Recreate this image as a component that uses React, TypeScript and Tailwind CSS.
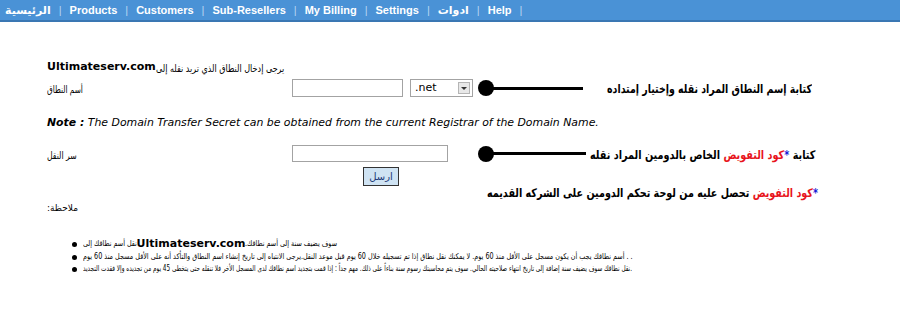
import React, { useLayoutEffect, useRef, useState } from "react";

const navItems = ["الرئيسية", "Products", "Customers", "Sub-Resellers", "My Billing", "Settings", "ادوات", "Help"];

function Sq({ w, s, className = "", children, dir }: { w?: number; s?: number; className?: string; children: React.ReactNode; dir?: "rtl" | "ltr" }) {
  const ref = useRef<HTMLSpanElement>(null);
  const [dims, setDims] = useState<{ k: number; ow: number } | null>(null);
  useLayoutEffect(() => {
    const m = () => {
      const el = ref.current;
      if (!el) return;
      const nw = el.offsetWidth;
      if (!nw) return;
      const k = w ? w / nw : s ?? 1;
      setDims({ k, ow: nw * k });
    };
    m();
    if (document.fonts) document.fonts.ready.then(m);
  }, [w, s]);
  return (
    <span className="inline-block shrink-0 align-top" style={{ width: dims ? dims.ow : undefined }}>
      <span
        ref={ref}
        dir={dir}
        className={"inline-block whitespace-nowrap origin-left " + className}
        style={{ transform: dims ? `scaleX(${dims.k})` : undefined }}
      >
        {children}
      </span>
    </span>
  );
}

function Pin({ len }: { len: number }) {
  return (
    <div className="flex items-center">
      <div className="w-[16px] h-[16px] rounded-full bg-black" />
      <div className="h-[3px] bg-black -ml-[1px]" style={{ width: len }} />
    </div>
  );
}

function Dot() {
  return <div className="w-[5px] h-[5px] rounded-full bg-black shrink-0 mr-[6px]" />;
}

export default function App() {
  return (
    <div className="w-[900px] h-[313px] bg-white text-black overflow-hidden" style={{ fontFamily: '"DejaVu Sans", sans-serif' }}>
      {/* nav */}
      <div className="h-[22px] bg-[#4a92d6] border-b-2 border-[#3a77b3] flex items-center pl-[5px] text-white font-bold text-[11px]" style={{ fontFamily: '"Liberation Sans", "DejaVu Sans", sans-serif' }}>
        {navItems.map((n) => (
          <React.Fragment key={n}>
            <span>{n}</span>
            <span className="mx-[8px] font-normal text-[#b8d6f2]">|</span>
          </React.Fragment>
        ))}
      </div>

      <div className="pl-[47px]">
        <div className="mt-[38px] flex items-center h-[14px]">
          <b className="text-[11px] leading-[14px]">Ultimateserv.com</b>
          <Sq w={128} className="text-[10px] leading-[14px]">يرجى إدخال النطاق الذي تريد نقله إلى</Sq>
        </div>

        <div className="mt-[5px] flex items-center h-[18px]">
          <div className="w-[245px] shrink-0">
            <Sq w={36} className="text-[10px]">أسم النطاق</Sq>
          </div>
          <div className="w-[111px] h-[18px] border border-[#a3a3a3] bg-white shrink-0" />
          <div className="ml-[7px] w-[63px] h-[18px] border border-[#a3a3a3] bg-white flex items-center justify-between pl-[4px] pr-[2px] shrink-0">
            <span className="text-[11px]">.net</span>
            <div className="w-[12px] h-[12px] bg-[#e8e8e8] border border-[#b5b5b5] flex items-center justify-center">
              <div className="w-0 h-0 border-l-[3px] border-r-[3px] border-t-[3px] border-l-transparent border-r-transparent border-t-[#333]" />
            </div>
          </div>
          <div className="ml-[5px] shrink-0"><Pin len={90} /></div>
          <div className="ml-[24px]">
            <Sq w={205} dir="rtl" className="font-bold text-[12px]">كتابة إسم النطاق المراد نقله وإختيار إمتداده</Sq>
          </div>
        </div>

        <div className="mt-[20px] text-[10.9px] italic leading-[12px] whitespace-nowrap">
          <b>Note :</b> The Domain Transfer Secret can be obtained from the current Registrar of the Domain Name.
        </div>

        <div className="mt-[16px] flex items-center h-[17px]">
          <div className="w-[245px] shrink-0">
            <Sq w={30} className="text-[10px]">سر النقل</Sq>
          </div>
          <div className="w-[156px] h-[17px] border border-[#a3a3a3] bg-white shrink-0" />
          <div className="ml-[30px] shrink-0"><Pin len={93} /></div>
          <div className="ml-[4px]">
            <Sq w={225} dir="rtl" className="font-bold text-[12px]">
              كتابة <span className="text-[#1a1ad6]">*</span><span className="text-[#e8141c]">كود التفويض</span> الخاص بالدومين المراد نقله
            </Sq>
          </div>
        </div>

        <div className="flex items-start h-[36px]">
          <button className="ml-[316px] mt-[5px] w-[36px] h-[19px] bg-[#cfe3f3] border border-[#333] text-[10px] text-[#1d3b78] leading-none shrink-0">ارسل</button>
          <div className="ml-[88px] mt-[18px]">
            <Sq w={331} dir="rtl" className="font-bold text-[12px] leading-[14px]">
              <span className="text-[#1a1ad6]">*</span><span className="text-[#e8141c]">كود التفويض</span> تحصل عليه من لوحة تحكم الدومين على الشركه القديمه
            </Sq>
          </div>
        </div>

        <div className="mt-[4px] text-[9px] leading-[12px]">:ملاحظة</div>

        <div className="mt-[24px] pl-[36px] text-[8px] leading-[12px]">
          <div className="flex items-center h-[12px] -ml-[11px]">
            <Dot />
            <Sq s={0.8}>نقل أسم نطاقك إلى</Sq>
            <b className="text-[11px] leading-[12px]">Ultimateserv.com</b>
            <Sq s={0.8}>.سوف يضيف سنة إلى أسم نطاقك</Sq>
          </div>
          <div className="flex items-center h-[12px] mt-[1px] -ml-[11px]">
            <Dot />
            <Sq w={550}>أسم نطاقك يجب أن يكون مسجل على الأقل منذ 60 يوم. لا يمكنك نقل نطاق إذا تم تسجيله خلال 60 يوم قبل موعد النقل.يرجى الانتباه إلى تاريخ إنشاء اسم النطاق والتأكد أنه على الأقل مسجل منذ 60 يوم . .</Sq>
          </div>
          <div className="flex items-center h-[12px] -ml-[11px]">
            <Dot />
            <Sq w={549}>نقل نطاقك سوف يضيف سنة إضافة إلى تاريخ انتهاء صلاحيته الحالي. سوف يتم محاسبتك رسوم سنة بناءاً على ذلك. مهم جداً : إذا قمت بتجديد اسم نطاقك لدى المسجل الأخر فلا تنقله حتى يتخطى 45 يوم من تجديده وإلا فقدت التجديد.</Sq>
          </div>
        </div>
      </div>
    </div>
  );
}
